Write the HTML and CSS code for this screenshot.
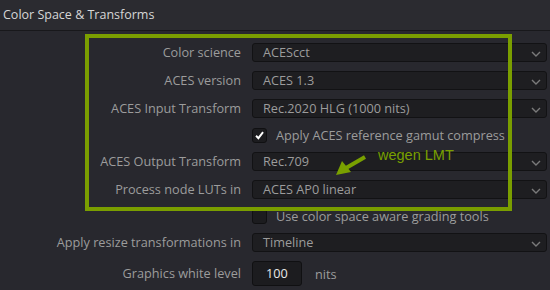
FILE: index.html
```html
<!DOCTYPE html>
<html>
<head>
<meta charset="utf-8">
<link rel="stylesheet" href="styles.css">
</head>
<body>
<div class="panel">
  <div class="header">Color Space &amp; Transforms</div>
  <div class="settings">
    <div class="label">Color science</div>
    <div class="select"><span>ACEScct</span><svg class="chev" viewBox="0 0 10 6"><path d="M1 1 L5 5 L9 1"/></svg></div>

    <div class="label">ACES version</div>
    <div class="select"><span>ACES 1.3</span><svg class="chev" viewBox="0 0 10 6"><path d="M1 1 L5 5 L9 1"/></svg></div>

    <div class="label">ACES Input Transform</div>
    <div class="select"><span>Rec.2020 HLG (1000 nits)</span><svg class="chev" viewBox="0 0 10 6"><path d="M1 1 L5 5 L9 1"/></svg></div>

    <div class="label short"></div>
    <div class="check-row"><span class="checkbox checked"><svg viewBox="0 0 15 15"><path d="M3.5 7.8 L6.2 10.6 L11.6 3.6"/></svg></span><span>Apply ACES reference gamut compress</span></div>

    <div class="label">ACES Output Transform</div>
    <div class="select"><span>Rec.709</span><svg class="chev" viewBox="0 0 10 6"><path d="M1 1 L5 5 L9 1"/></svg></div>

    <div class="label">Process node LUTs in</div>
    <div class="select"><span>ACES AP0 linear</span><svg class="chev" viewBox="0 0 10 6"><path d="M1 1 L5 5 L9 1"/></svg></div>

    <div class="label short"></div>
    <div class="check-row"><span class="checkbox"></span><span>Use color space aware grading tools</span></div>

    <div class="label">Apply resize transformations in</div>
    <div class="select"><span>Timeline</span><svg class="chev" viewBox="0 0 10 6"><path d="M1 1 L5 5 L9 1"/></svg></div>

    <div class="label tall">Graphics white level</div>
    <div class="input-row"><span class="num">100</span><span>nits</span></div>
  </div>

  <div class="highlight"></div>
  <div class="note">
    <span class="note-text">wegen LMT</span>
    <svg class="arrow" viewBox="0 0 40 24"><path class="shaft" d="M33 3 L14 14"/><path class="head" d="M4 21 L10 7 L19 18 Z"/></svg>
  </div>
</div>
</body>
</html>
```
FILE: styles.css
```css
html, body {
  margin: 0;
  padding: 0;
  background: #28282e;
}
body {
  font-family: "Open Sans", "Noto Sans", sans-serif;
  width: 550px;
  height: 290px;
  overflow: hidden;
}
.panel {
  position: relative;
  width: 550px;
  height: 290px;
}
.header {
  padding-left: 3px;
  font-size: 12.5px;
  color: #d6d6d6;
  background: #2b2b30;
  border-bottom: 1px solid #18181b;
  box-sizing: border-box;
  height: 31px;
  line-height: 29px;
}
.settings {
  display: grid;
  grid-template-columns: 241px 295px;
  column-gap: 11px;
  row-gap: 9px;
  padding-top: 12px;
  font-size: 12.7px;
  color: #9c9c9c;
}
.label {
  text-align: right;
  height: 19px;
  line-height: 19px;
  white-space: nowrap;
}
.label.short {
  height: 16px;
}
.label.tall {
  height: 25px;
  line-height: 25px;
}
.select {
  height: 19px;
  box-sizing: border-box;
  background: #1e1e21;
  border: 1px solid #121214;
  border-radius: 3px;
  display: flex;
  align-items: center;
  justify-content: space-between;
  padding: 0 5px 0 10px;
  line-height: 17px;
}
.chev {
  width: 10px;
  height: 6px;
  margin-top: 3px;
  fill: none;
  stroke: #7a7a7a;
  stroke-width: 1.4;
}
.check-row {
  height: 16px;
  display: flex;
  align-items: center;
  gap: 9px;
  line-height: 16px;
  white-space: nowrap;
}
.checkbox {
  width: 15px;
  height: 15px;
  margin-top: 1px;
  box-sizing: border-box;
  background: #1c1c1f;
  border: 1px solid #101012;
  border-radius: 3px;
  display: flex;
  align-items: center;
  justify-content: center;
  flex: none;
}
.checkbox svg {
  width: 15px;
  height: 15px;
  fill: none;
  stroke: #ffffff;
  stroke-width: 2.2;
}
.input-row {
  display: flex;
  align-items: center;
  gap: 13px;
  height: 25px;
}
.num {
  width: 50px;
  height: 25px;
  box-sizing: border-box;
  background: #1c1c1f;
  border: 1px solid #101012;
  border-radius: 3px;
  color: #e8e8e8;
  text-align: center;
  line-height: 23px;
}
.highlight {
  position: absolute;
  left: 85px;
  top: 34px;
  width: 427px;
  height: 177px;
  box-sizing: border-box;
  border: 4px solid #7a9e00;
  pointer-events: none;
}
.note {
  position: absolute;
  left: 332px;
  top: 146px;
  width: 130px;
  height: 34px;
}
.note-text {
  position: absolute;
  left: 46px;
  top: 1px;
  font-family: "Liberation Sans", Arial, sans-serif;
  font-size: 14.5px;
  color: #79a000;
}
.arrow {
  position: absolute;
  left: 0;
  top: 8px;
  width: 40px;
  height: 24px;
}
.arrow .shaft {
  stroke: #79a000;
  stroke-width: 4;
  fill: none;
}
.arrow .head {
  fill: #79a000;
}
```
